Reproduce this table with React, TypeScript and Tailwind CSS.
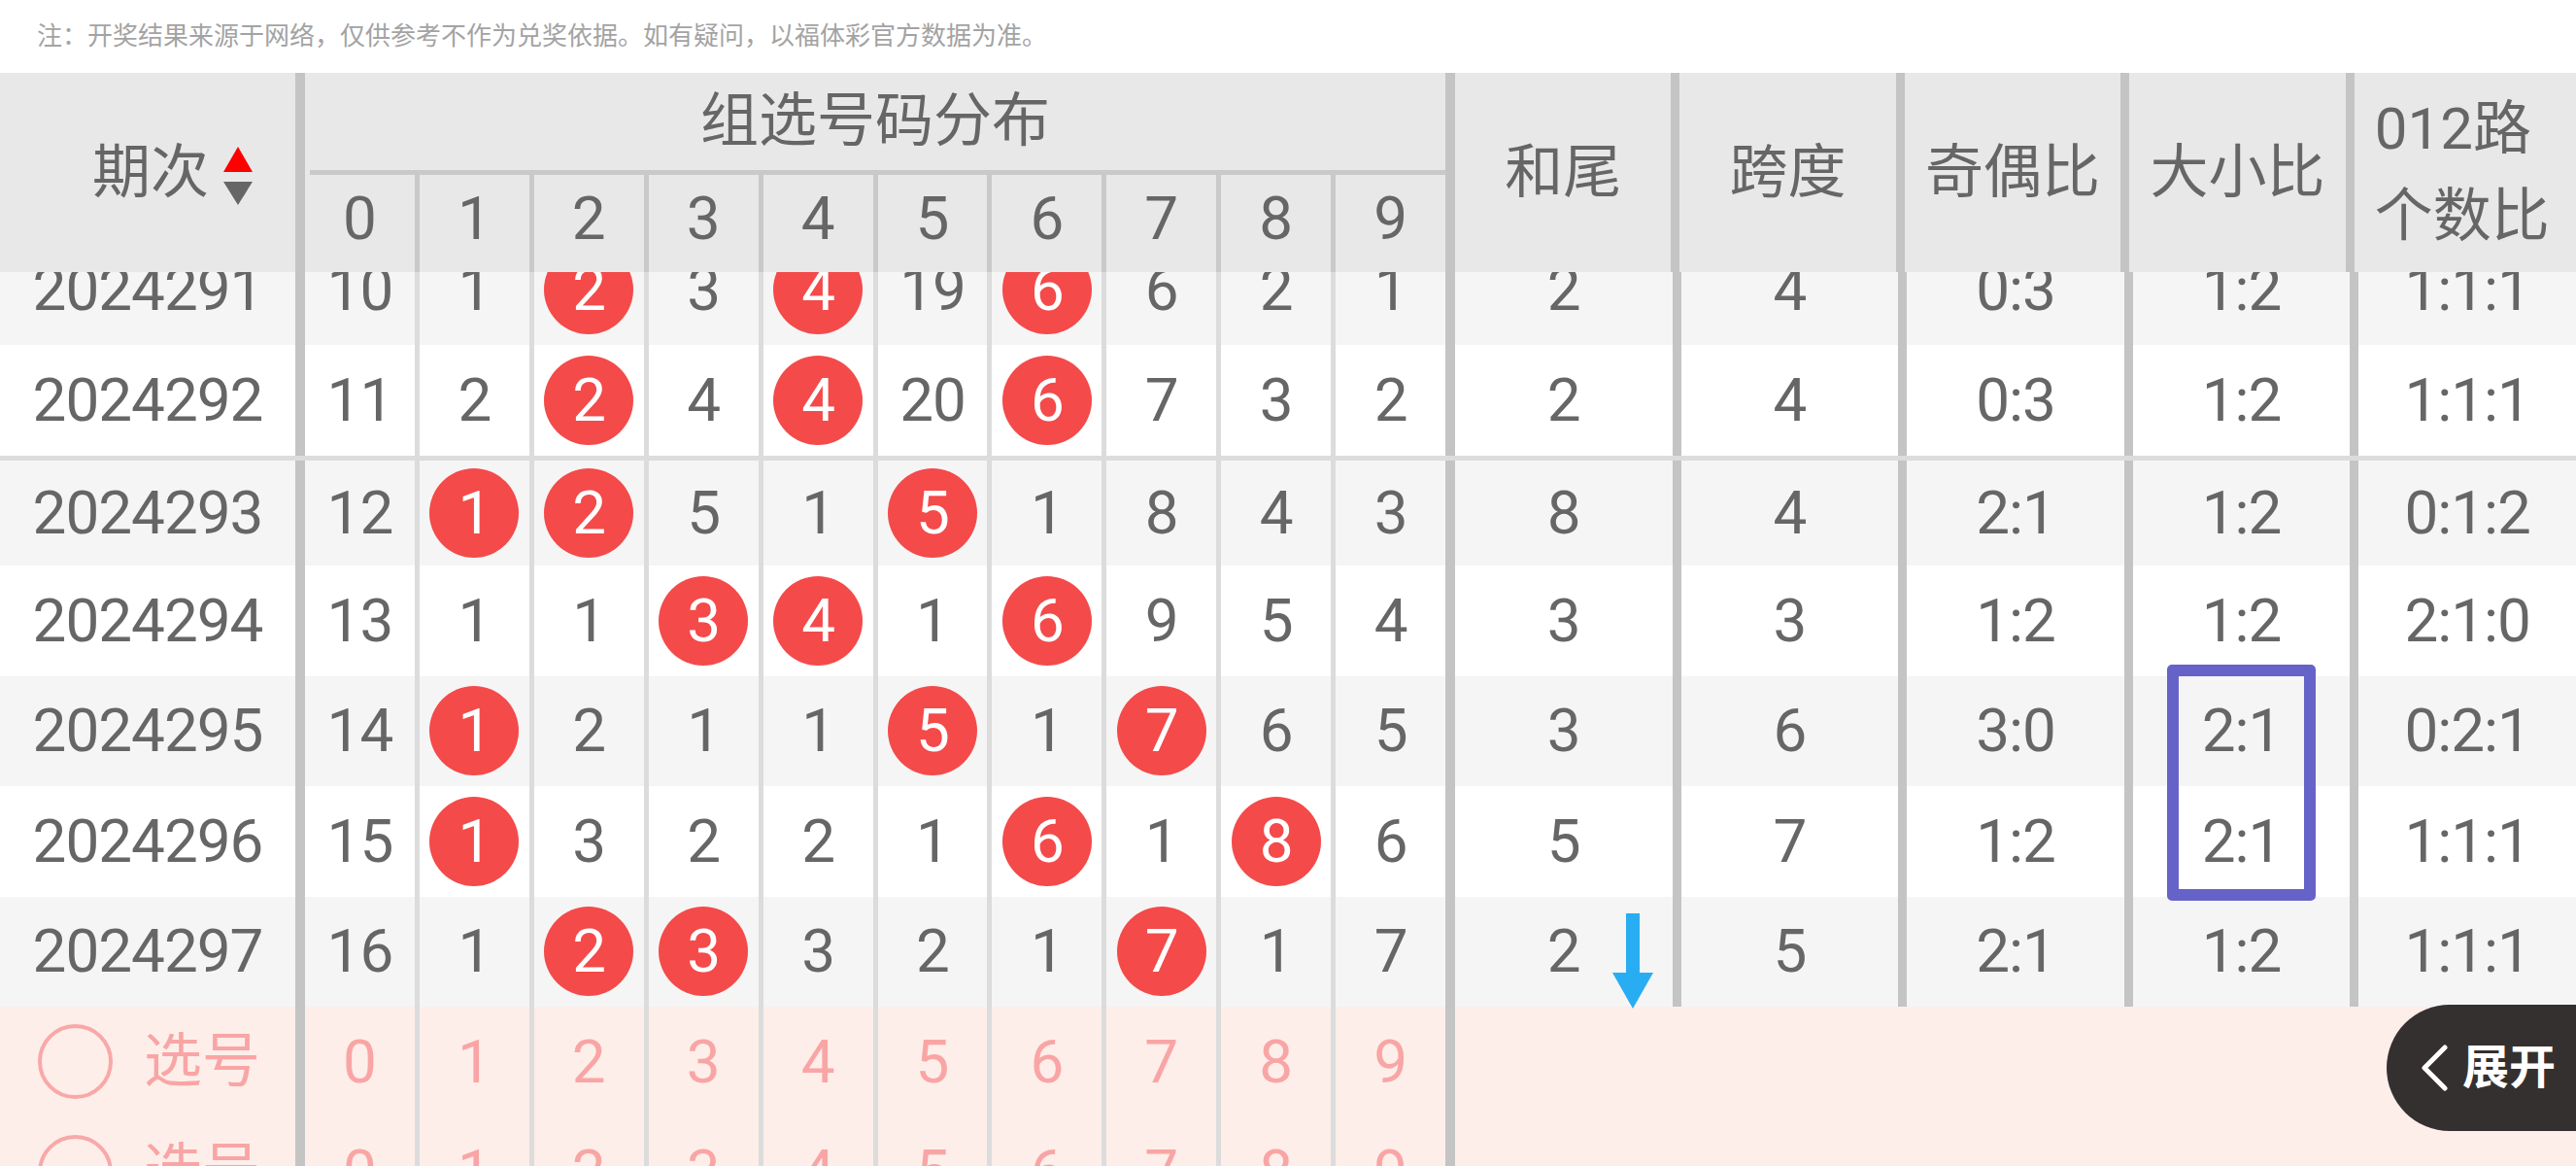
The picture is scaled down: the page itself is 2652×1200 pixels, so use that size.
import React from 'react';

type Row = {
  qi: string;
  values: number[];
  hits: number[];
  stats: string[];
  group?: boolean;
};

const rows: Row[] = [
  { qi: '2024291', values: [10, 1, 2, 3, 4, 19, 6, 6, 2, 1], hits: [2, 4, 6], stats: ['2', '4', '0:3', '1:2', '1:1:1'] },
  { qi: '2024292', values: [11, 2, 2, 4, 4, 20, 6, 7, 3, 2], hits: [2, 4, 6], stats: ['2', '4', '0:3', '1:2', '1:1:1'] },
  { qi: '2024293', values: [12, 1, 2, 5, 1, 5, 1, 8, 4, 3], hits: [1, 2, 5], stats: ['8', '4', '2:1', '1:2', '0:1:2'], group: true },
  { qi: '2024294', values: [13, 1, 1, 3, 4, 1, 6, 9, 5, 4], hits: [3, 4, 6], stats: ['3', '3', '1:2', '1:2', '2:1:0'] },
  { qi: '2024295', values: [14, 1, 2, 1, 1, 5, 1, 7, 6, 5], hits: [1, 5, 7], stats: ['3', '6', '3:0', '2:1', '0:2:1'] },
  { qi: '2024296', values: [15, 1, 3, 2, 2, 1, 6, 1, 8, 6], hits: [1, 6, 8], stats: ['5', '7', '1:2', '2:1', '1:1:1'] },
  { qi: '2024297', values: [16, 1, 2, 3, 3, 2, 1, 7, 1, 7], hits: [2, 3, 7], stats: ['2', '5', '2:1', '1:2', '1:1:1'] },
];

const digits = [0, 1, 2, 3, 4, 5, 6, 7, 8, 9];
const statHeads = ['和尾', '跨度', '奇偶比', '大小比'];

function SortIcon() {
  return (
    <svg width="30" height="60" viewBox="0 0 30 60" className="ml-[15px] mt-[6px]">
      <polygon points="15,0 30,26 0,26" fill="#ff0000" />
      <polygon points="0,36 30,36 15,60" fill="#666666" />
    </svg>
  );
}

function DataRow({ row, index }: { row: Row; index: number }) {
  const bg = index % 2 === 0 ? 'bg-[#f5f5f5]' : 'bg-white';
  return (
    <div className={`flex h-[113.5px] ${bg} ${row.group ? 'border-t-[5px] border-[#dcdcdc]' : ''}`}>
      <div className="flex w-[314px] shrink-0 items-center justify-center border-r-[10px] border-[#c4c4c4] text-[62px] leading-none tracking-[-1px]">
        {row.qi}
      </div>
      <div className="flex w-[1184px] shrink-0 border-r-[10px] border-[#c4c4c4]">
        {row.values.map((v, i) => (
          <div
            key={i}
            className={`flex flex-1 items-center justify-center text-[62px] leading-none tracking-[-1px] ${i > 0 ? 'border-l-[5px] border-[#dcdcdc]' : ''}`}
          >
            {row.hits.includes(i) ? (
              <span className="flex h-[92px] w-[92px] items-center justify-center rounded-full bg-[#f44a4a] text-white">
                {v}
              </span>
            ) : (
              v
            )}
          </div>
        ))}
      </div>
      <div className="flex flex-1">
        {row.stats.map((s, i) => (
          <div
            key={i}
            className={`flex flex-1 items-center justify-center text-[62px] leading-none tracking-[-1px] ${i > 0 ? 'border-l-[9px] border-[#c4c4c4]' : ''}`}
          >
            {s}
          </div>
        ))}
      </div>
    </div>
  );
}

function PickRow() {
  return (
    <div className="flex h-[113.5px] bg-[#fdeee9]">
      <div className="flex w-[314px] shrink-0 items-center border-r-[10px] border-[#c4c4c4] pl-[39px]">
        <span className="h-[77px] w-[77px] rounded-full border-[4px] border-[#f9a8a8]" />
        <span className="ml-[32px] text-[60px] leading-none text-[#f9a5a5]">选号</span>
      </div>
      <div className="flex w-[1184px] shrink-0 border-r-[10px] border-[#c4c4c4]">
        {digits.map((d) => (
          <div
            key={d}
            className={`flex flex-1 items-center justify-center text-[62px] leading-none text-[#f9a5a5] ${d > 0 ? 'border-l-[5px] border-[#dcdcdc]' : ''}`}
          >
            {d}
          </div>
        ))}
      </div>
      <div className="flex-1" />
    </div>
  );
}

export default function App() {
  return (
    <div className="relative h-[1200px] w-[2652px] overflow-hidden bg-white font-[Roboto,'Noto_Sans_CJK_SC',sans-serif] text-[#666666]">
      {/* note */}
      <div className="flex h-[75px] items-center pl-[38px] text-[26px] text-[#a3a3a3]">
        注：开奖结果来源于网络，仅供参考不作为兑奖依据。如有疑问，以福体彩官方数据为准。
      </div>

      {/* table header */}
      <div className="flex h-[205px] bg-[#e8e8e8]">
        <div className="flex w-[314px] shrink-0 items-center border-r-[10px] border-[#c4c4c4] pl-[95px]">
          <span className="text-[60px] leading-none">期次</span>
          <SortIcon />
        </div>
        <div className="flex w-[1184px] shrink-0 flex-col border-r-[10px] border-[#c4c4c4]">
          <div className="flex h-[100px] items-center justify-center text-[60px] leading-none">组选号码分布</div>
          <div className="ml-[5px] h-[5px] bg-[#c9c9c9]" />
          <div className="flex flex-1">
            {digits.map((d) => (
              <div
                key={d}
                className={`flex flex-1 justify-center pt-[14px] text-[62px] leading-none ${d > 0 ? 'border-l-[5px] border-[#c9c9c9]' : ''}`}
              >
                {d}
              </div>
            ))}
          </div>
        </div>
        <div className="flex flex-1">
          {statHeads.map((h, i) => (
            <div
              key={h}
              className={`flex flex-1 items-center justify-center text-[60px] leading-none ${i > 0 ? 'border-l-[9px] border-[#c4c4c4]' : ''}`}
            >
              {h}
            </div>
          ))}
          <div className="flex flex-1 items-center justify-center border-l-[9px] border-[#c4c4c4] pr-[6px]">
            <div className="text-left text-[60px] leading-[90px]">
              012路
              <br />
              个数比
            </div>
          </div>
        </div>
      </div>

      {/* table body, scrolled */}
      <div className="h-[920px] overflow-hidden">
        <div className="-mt-[38.5px]">
          {rows.map((r, i) => (
            <DataRow key={r.qi} row={r} index={i} />
          ))}
          <PickRow />
          <PickRow />
        </div>
      </div>

      {/* blue arrow marker */}
      <svg width="42" height="98" viewBox="0 0 42 98" className="absolute left-[1660px] top-[940px]">
        <rect x="14" y="0" width="14" height="62" fill="#29adf2" />
        <polygon points="0,61 42,61 21,98" fill="#29adf2" />
      </svg>

      {/* highlight box */}
      <div className="absolute left-[2231px] top-[684px] h-[243px] w-[153px] rounded-[5px] border-[12px] border-[#6663c8]" />

      {/* expand button */}
      <div className="absolute right-0 top-[1034px] flex h-[130px] w-[195px] items-center rounded-l-[65px] bg-[#353030] pl-[35px]">
        <svg width="28" height="48" viewBox="0 0 28 48">
          <polyline points="25,3 4,24 25,45" fill="none" stroke="#ffffff" strokeWidth="5" strokeLinecap="round" strokeLinejoin="round" />
        </svg>
        <span className="ml-[15px] text-[48px] font-bold leading-none text-white">展开</span>
      </div>
    </div>
  );
}
